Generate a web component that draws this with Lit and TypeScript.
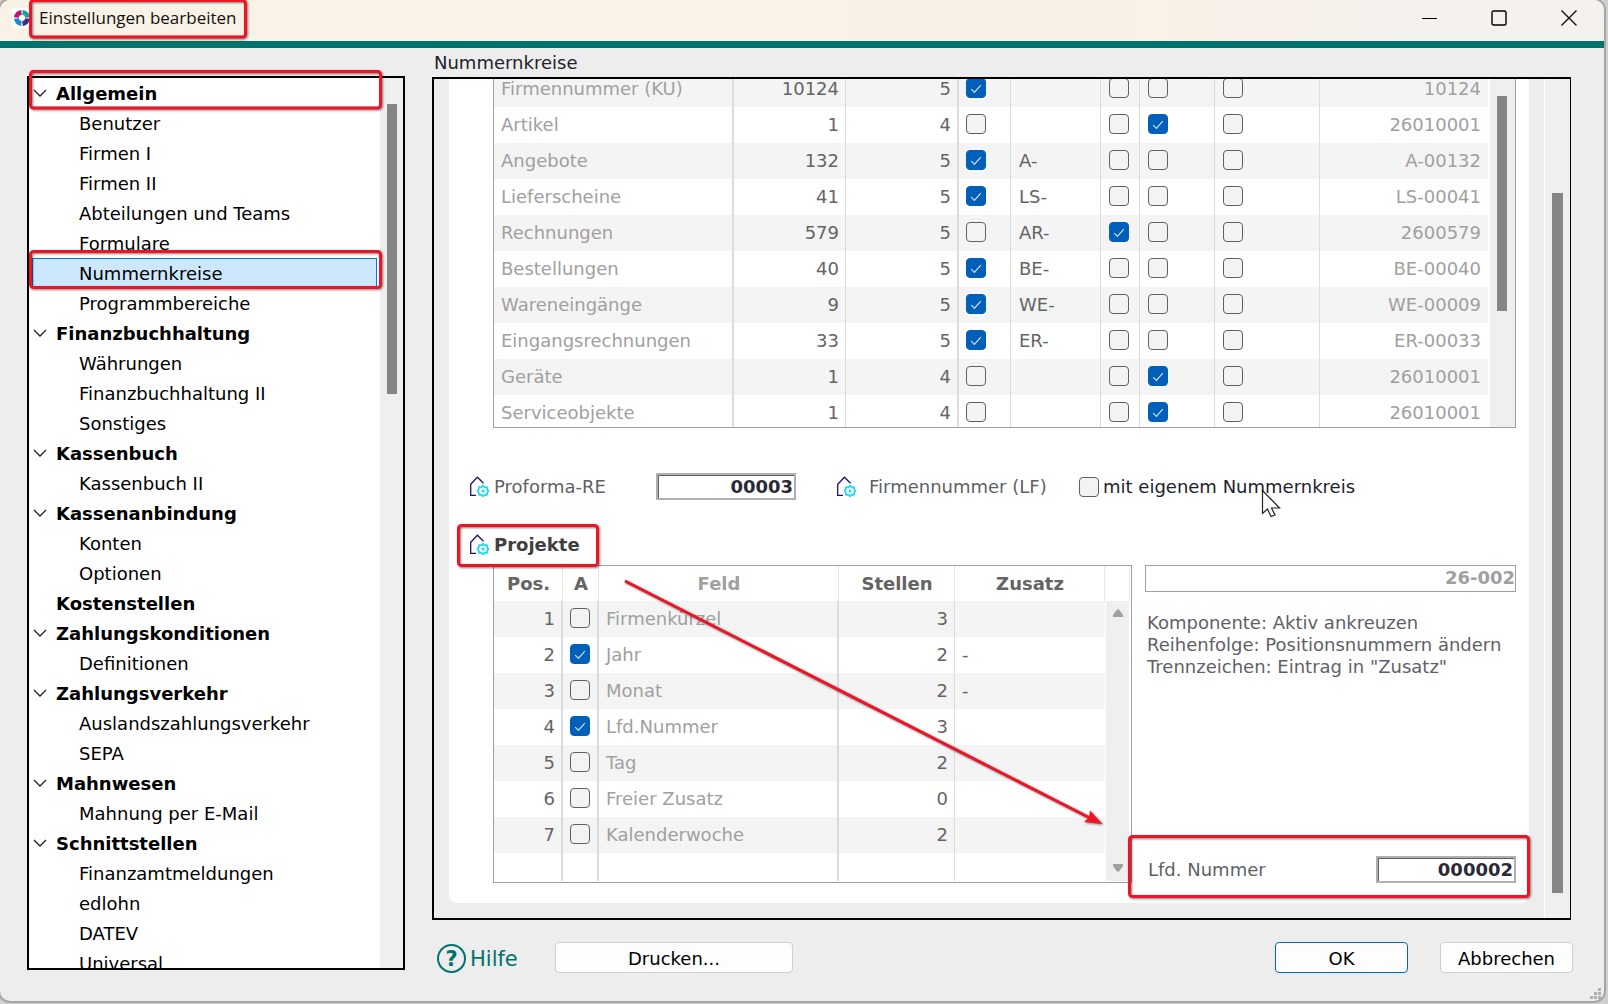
import { LitElement, html, css, svg, nothing } from "lit";
import { customElement, property } from "lit/decorators.js";
import { classMap } from "lit/directives/class-map.js";

interface TreeItem {
  text: string;
  group?: boolean;
  open?: boolean;
  selected?: boolean;
}

const g = (text: string, open = true): TreeItem => ({ text, group: true, open });
const c = (text: string, selected = false): TreeItem => ({ text, selected });

const TREE: TreeItem[] = [
  g("Allgemein"),
  c("Benutzer"),
  c("Firmen I"),
  c("Firmen II"),
  c("Abteilungen und Teams"),
  c("Formulare"),
  c("Nummernkreise", true),
  c("Programmbereiche"),
  g("Finanzbuchhaltung"),
  c("Währungen"),
  c("Finanzbuchhaltung II"),
  c("Sonstiges"),
  g("Kassenbuch"),
  c("Kassenbuch II"),
  g("Kassenanbindung"),
  c("Konten"),
  c("Optionen"),
  g("Kostenstellen", false),
  g("Zahlungskonditionen"),
  c("Definitionen"),
  g("Zahlungsverkehr"),
  c("Auslandszahlungsverkehr"),
  c("SEPA"),
  g("Mahnwesen"),
  c("Mahnung per E-Mail"),
  g("Schnittstellen"),
  c("Finanzamtmeldungen"),
  c("edlohn"),
  c("DATEV"),
  c("Universal"),
];

interface RangeRow {
  name: string;
  next: string;
  digits: string;
  fill: boolean;
  prefix: string;
  year: boolean;
  month: boolean;
  day: boolean;
  sample: string;
}

const r = (
  name: string, next: string, digits: string, fill: boolean, prefix: string,
  year: boolean, month: boolean, sample: string,
): RangeRow => ({ name, next, digits, fill, prefix, year, month, day: false, sample });

const RANGES: RangeRow[] = [
  r("Firmennummer (KU)", "10124", "5", true, "", false, false, "10124"),
  r("Artikel", "1", "4", false, "", false, true, "26010001"),
  r("Angebote", "132", "5", true, "A-", false, false, "A-00132"),
  r("Lieferscheine", "41", "5", true, "LS-", false, false, "LS-00041"),
  r("Rechnungen", "579", "5", false, "AR-", true, false, "2600579"),
  r("Bestellungen", "40", "5", true, "BE-", false, false, "BE-00040"),
  r("Wareneingänge", "9", "5", true, "WE-", false, false, "WE-00009"),
  r("Eingangsrechnungen", "33", "5", true, "ER-", false, false, "ER-00033"),
  r("Geräte", "1", "4", false, "", false, true, "26010001"),
  r("Serviceobjekte", "1", "4", false, "", false, true, "26010001"),
];

const PARTS = [
  { field: "Firmenkürzel", on: false, digits: "3", extra: "" },
  { field: "Jahr", on: true, digits: "2", extra: "-" },
  { field: "Monat", on: false, digits: "2", extra: "-" },
  { field: "Lfd.Nummer", on: true, digits: "3", extra: "" },
  { field: "Tag", on: false, digits: "2", extra: "" },
  { field: "Freier Zusatz", on: false, digits: "0", extra: "" },
  { field: "Kalenderwoche", on: false, digits: "2", extra: "" },
];

const checkboxStyles = css`
  input[type="checkbox"] {
    appearance: none;
    display: block;
    flex: none;
    box-sizing: border-box;
    width: 20px;
    height: 20px;
    margin: 0;
    border: 1px solid #606060;
    border-radius: 4px;
    background: #f3f3f3;
  }
  input[type="checkbox"]:checked {
    border-color: #005fb8;
    background: #005fb8;
  }
  input[type="checkbox"]:checked::after {
    content: "";
    display: block;
    box-sizing: border-box;
    width: 10px;
    height: 5px;
    margin: 6px 4px;
    border: solid #e4eef8;
    border-width: 0 0 1px 1px;
    transform: rotate(-48deg);
  }
`;

@customElement("range-icon")
export class RangeIcon extends LitElement {
  static styles = css`
    :host { display: block; flex: none; width: 20px; height: 21px; }
    svg { display: block; }
  `;
  render() {
    return html`<svg width="20" height="21" viewBox="0 0 20 21" fill="none" aria-hidden="true">
      <path d="M7 19.300H1.700V8.200L8.400 1.200L14.500 7.200" stroke="#1b1464" stroke-width="1.300" />
      <path
        d="M14 9.600l1.600 1.700 2.400-.3.200 2.400 1.300 1.600-1.300 1.600-.2 2.400-2.400-.3L14 20.400l-1.600-1.700-2.400.3-.2-2.400L8.500 15l1.300-1.600.2-2.400 2.400.3z"
        stroke="#14dcf5" stroke-width="1.700" stroke-linejoin="round" />
      <circle cx="14" cy="15" r="1.500" fill="#14dcf5" />
    </svg>`;
  }
}

@customElement("settings-tree")
export class SettingsTree extends LitElement {
  static styles = css`
    :host {
      display: flex;
      box-sizing: border-box;
      min-height: 0;
      overflow: hidden;
      border: 2px solid #000;
      background: #efefef;
    }
    .list {
      flex: 1;
      margin: 0;
      padding: 0 3px 0 3px;
      list-style: none;
      background: #fff;
      overflow: hidden;
    }
    .item {
      display: flex;
      align-items: center;
      box-sizing: border-box;
      height: 30px;
      padding-left: 46px;
      border: 1px solid transparent;
      color: #000;
      text-decoration: none;
      white-space: nowrap;
    }
    .group { padding-left: 0; font-weight: bold; }
    .selected { border-color: #0078d7; background: #cce8ff; }
    .chevron { flex: none; width: 14px; height: 14px; margin-right: 9px; }
    .track { flex: none; width: 23px; padding-top: 26px; box-sizing: border-box; }
    .thumb { width: 10px; height: 290px; margin-left: 7px; background: #858585; }
  `;
  render() {
    return html`
      <ul class="list">
        ${TREE.map(
          (item) => html`<li>
            <a href="#" class=${classMap({ item: true, group: !!item.group, selected: !!item.selected })}>
              ${item.group
                ? html`<svg class="chevron" viewBox="0 0 14 14" aria-hidden="true">
                    ${item.open
                      ? svg`<path d="M1 4L7 10L13 4" fill="none" stroke="#222" stroke-width="1.300" />`
                      : nothing}
                  </svg>`
                : nothing}
              <span>${item.text}</span>
            </a>
          </li>`,
        )}
      </ul>
      <div class="track"><div class="thumb"></div></div>
    `;
  }
}

@customElement("range-table")
export class RangeTable extends LitElement {
  static styles = [
    checkboxStyles,
    css`
      :host {
        display: flex;
        box-sizing: border-box;
        height: 357px;
        overflow: hidden;
        border: 1px solid #a0a0a0;
        border-top: 0;
        background: #fff;
      }
      .view { flex: 1; overflow: hidden; }
      table { width: 100%; table-layout: fixed; border-collapse: separate; border-spacing: 0; }
      tr:nth-child(odd) { background: #f4f4f4; }
      td {
        box-sizing: border-box;
        height: 36px;
        padding: 0 6px 0 7px;
        border-right: 1px solid #dcdcdc;
        color: #646464;
        line-height: 20px;
        white-space: nowrap;
      }
      td.wide { border-right-width: 2px; }
      td:last-child { border-right: 0; padding-right: 7px; }
      td.prefixed { padding-left: 8px; }
      td.box { padding: 0 0 2px 8px; }
      td.first { padding-left: 7px; }
      .num { text-align: right; }
      td.dim { color: #a0a0a0; }
      .name { width: 240px; }
      .next { width: 112px; }
      .digits { width: 113px; }
      .fill { width: 52px; }
      .prefix { width: 90px; }
      .year { width: 39px; }
      .month { width: 75px; }
      .day { width: 105px; }
      .track { flex: none; width: 25px; margin-left: 2px; padding-top: 25px; box-sizing: border-box; background: #efefef; }
      .thumb { width: 10px; height: 215px; margin-left: 7px; background: #858585; }
    `,
  ];
  private box(row: RangeRow, label: string, on: boolean, first = false) {
    return html`<td class=${classMap({ box: true, first })}>
      <input type="checkbox" .checked=${on} aria-label="${row.name}: ${label}" />
    </td>`;
  }
  render() {
    return html`
      <div class="view">
        <table>
          <colgroup>
            <col class="name" /><col class="next" /><col class="digits" /><col class="fill" />
            <col class="prefix" /><col class="year" /><col class="month" /><col class="day" /><col />
          </colgroup>
          <tbody>
            ${RANGES.map(
              (row) => html`<tr>
                <td class="wide dim">${row.name}</td>
                <td class="num">${row.next}</td>
                <td class="num wide">${row.digits}</td>
                ${this.box(row, "Auffüllen", row.fill, true)}
                <td class="prefixed">${row.prefix}</td>
                ${this.box(row, "Jahr", row.year)} ${this.box(row, "Monat", row.month)}
                ${this.box(row, "Tag", row.day)}
                <td class="num dim">${row.sample}</td>
              </tr>`,
            )}
          </tbody>
        </table>
      </div>
      <div class="track"><div class="thumb"></div></div>
    `;
  }
}

@customElement("part-table")
export class PartTable extends LitElement {
  static styles = [
    checkboxStyles,
    css`
      :host {
        display: flex;
        box-sizing: border-box;
        height: 318px;
        overflow: hidden;
        border: 1px solid #a0a0a0;
        background: #fff;
      }
      .view { flex: 1; overflow: hidden; }
      table { width: 100%; table-layout: fixed; border-collapse: separate; border-spacing: 0; }
      tbody tr:nth-child(odd) { background: #f4f4f4; }
      tbody tr.blank { background: #fff; }
      th, td {
        box-sizing: border-box;
        height: 36px;
        padding: 0 7px;
        border-right: 1px solid #dcdcdc;
        color: #646464;
        line-height: 20px;
        white-space: nowrap;
      }
      th { height: 35px; padding: 1px 0 0 1px; border-right-color: #e6e6e6; text-align: center; }
      td:last-child { border-right-color: transparent; }
      td.wide { border-right-width: 2px; }
      td.box { padding: 0 0 2px 7px; }
      td.num { padding-right: 6px; text-align: right; }
      .blank td { height: 28px; }
      th.dim, td.dim { color: #a0a0a0; }
      .pos { width: 69px; }
      .active { width: 36px; }
      .field { width: 240px; }
      .digits { width: 116px; }
      .side { display: flex; flex-direction: column; flex: none; width: 26px; }
      .head { height: 35px; margin-right: 1px; border-right: 1px solid #e6e6e6; }
      .track {
        display: flex;
        flex: 1;
        flex-direction: column;
        align-items: center;
        justify-content: space-between;
        margin: 0 2px 1px 1px;
        padding: 8px 0 9px;
        background: #efefef;
      }
    `,
  ];
  render() {
    return html`
      <div class="view">
        <table>
          <colgroup>
            <col class="pos" /><col class="active" /><col class="field" /><col class="digits" /><col />
          </colgroup>
          <thead>
            <tr>
              <th>Pos.</th>
              <th>A</th>
              <th class="dim">Feld</th>
              <th>Stellen</th>
              <th>Zusatz</th>
            </tr>
          </thead>
          <tbody>
            ${PARTS.map(
              (part, i) => html`<tr>
                <td class="num wide">${i + 1}</td>
                <td class="box wide"><input type="checkbox" .checked=${part.on} aria-label="${part.field} aktiv" /></td>
                <td class="dim wide">${part.field}</td>
                <td class="num">${part.digits}</td>
                <td>${part.extra}</td>
              </tr>`,
            )}
            <tr class="blank"><td class="wide"></td><td class="wide"></td><td class="wide"></td><td></td><td></td></tr>
          </tbody>
        </table>
      </div>
      <div class="side">
        <div class="head"></div>
        <div class="track">
          <svg width="10" height="8" viewBox="0 0 10 8" aria-hidden="true">
            <path d="M4 .500h2L10 6v2H0V6z" fill="#a0a0a0" />
          </svg>
          <svg width="10" height="8" viewBox="0 0 10 8" aria-hidden="true">
            <path d="M0 0h10v2L6 7.500H4L0 2z" fill="#a0a0a0" />
          </svg>
        </div>
      </div>
    `;
  }
}

@customElement("number-ranges")
export class NumberRanges extends LitElement {
  static styles = [
    checkboxStyles,
    css`
      :host {
        display: flex;
        box-sizing: border-box;
        min-height: 0;
        overflow: hidden;
        border: 2px solid #000;
        border-right-width: 1px;
        background: #ededed;
      }
      .view { flex: 1; min-width: 0; padding: 0 15px; overflow: hidden; }
      /* The page is scrolled: its first table starts above the visible area. */
      .card {
        box-sizing: border-box;
        margin-top: -8px;
        padding: 0 13px 20px 20px;
        border-radius: 0 0 8px 8px;
        background: #fff;
      }
      range-table, .project { margin-left: 24px; }
      .line { display: flex; align-items: center; height: 27px; color: #5f5f68; }
      .single { margin-top: 45px; }
      .heading { margin: 31px 0 7px; }
      h2 { margin: 0 0 0 5px; font-size: 18px; line-height: 21px; color: #3f3f3f; }
      .caption { margin-left: 5px; width: 162px; }
      .supplier { margin-left: 13px; width: 210px; }
      .number {
        box-sizing: border-box;
        width: 140px;
        height: 27px;
        padding: 0 1px;
        border: 2px solid #b0b0b0;
        border-radius: 0;
        background: #fff;
        box-shadow: inset 1px 1px 0 #606060;
        color: #2a2a34;
        font: bold 18px "DejaVu Sans", Verdana, sans-serif;
        text-align: right;
      }
      .single .number { margin-right: 40px; }
      .own { background: #e8e8e8; }
      .own-label { margin-left: 4px; color: #22222c; }
      .project { display: grid; grid-template-columns: 639px 1fr; gap: 13px; }
      .details { display: flex; flex-direction: column; min-width: 0; }
      .sample {
        box-sizing: border-box;
        width: 100%;
        height: 27px;
        padding: 0 0 2px;
        border: 1px solid #a0a0a0;
        border-radius: 0;
        background: #fff;
        color: #a0a0a0;
        font: bold 18px "DejaVu Sans", Verdana, sans-serif;
        text-align: right;
      }
      .hint { margin: 20px 0 0 2px; color: #5f5f68; line-height: 22px; white-space: nowrap; }
      .last { justify-content: space-between; margin-top: auto; padding-left: 3px; }
      .track { flex: none; width: 26px; padding-top: 114px; box-sizing: border-box; border-left: 1px solid #fff; background: #efefef; }
      .thumb { width: 11px; height: 700px; margin-left: 7px; background: #858585; }
    `,
  ];
  render() {
    return html`
      <div class="view">
        <div class="card">
          <range-table></range-table>
          <div class="line single">
            <range-icon></range-icon>
            <label class="caption" for="proforma">Proforma-RE</label>
            <input class="number" id="proforma" type="text" .value=${"00003"} />
            <range-icon></range-icon>
            <span class="supplier">Firmennummer (LF)</span>
            <input class="own" id="own" type="checkbox" />
            <label class="own-label" for="own">mit eigenem Nummernkreis</label>
          </div>
          <div class="line heading">
            <range-icon></range-icon>
            <h2>Projekte</h2>
          </div>
          <div class="project">
            <part-table></part-table>
            <div class="details">
              <input class="sample" type="text" readonly aria-label="Beispiel" .value=${"26-002"} />
              <p class="hint">
                Komponente: Aktiv ankreuzen<br />Reihenfolge: Positionsnummern ändern<br />Trennzeichen: Eintrag in
                "Zusatz"
              </p>
              <div class="line last">
                <label for="serial">Lfd. Nummer</label>
                <input class="number" id="serial" type="text" .value=${"000002"} />
              </div>
            </div>
          </div>
        </div>
      </div>
      <div class="track"><div class="thumb"></div></div>
    `;
  }
}

@customElement("title-bar")
export class TitleBar extends LitElement {
  @property() heading = "";
  static styles = css`
    :host {
      display: flex;
      align-items: center;
      box-sizing: border-box;
      height: 48px;
      padding: 0 15px 5px 12px;
      border-bottom: 7px solid #00736c;
      background: linear-gradient(90deg, #f9f2e6 0%, #faf1e6 70%, #f5f1ed 88%);
    }
    .logo { flex: none; width: 20px; height: 20px; border-radius: 4px; background: #fff; }
    h1 {
      flex: 1;
      margin: 0 0 0 7px;
      color: #111;
      font: 17px/24px "Open Sans", "Segoe UI", sans-serif;
      white-space: nowrap;
    }
    button {
      display: grid;
      place-items: center;
      width: 40px;
      height: 30px;
      margin-left: 30px;
      padding: 0;
      border: 0;
      background: none;
    }
  `;
  render() {
    return html`
      <svg class="logo" viewBox="0 0 20 20" aria-hidden="true">
        <g fill="none" stroke-width="4.800">
          <path d="M9.500 4.400A5.600 5.600 0 0 0 4.400 9.500" stroke="#c0146e" />
          <path d="M10.500 4.400A5.600 5.600 0 0 1 15.600 9.500" stroke="#0aa79d" />
          <path d="M15.600 10.500A5.600 5.600 0 0 1 10.500 15.600" stroke="#3a2f86" />
          <path d="M9.500 15.600A5.600 5.600 0 0 1 4.400 10.500" stroke="#1a86cf" />
        </g>
      </svg>
      <h1>${this.heading}</h1>
      <button type="button" aria-label="Minimieren">
        <svg width="16" height="16" viewBox="0 0 16 16"><path d="M1 8.500H16" stroke="#000" /></svg>
      </button>
      <button type="button" aria-label="Maximieren">
        <svg width="16" height="16" viewBox="0 0 16 16">
          <rect x="1" y="1" width="14" height="14" rx="1.500" fill="none" stroke="#000" stroke-width="1.400" />
        </svg>
      </button>
      <button type="button" aria-label="Schließen">
        <svg width="16" height="16" viewBox="0 0 16 16">
          <path d="M.500 .500L15.500 15.500M15.500 .500L.500 15.500" stroke="#111" stroke-width="1.400" />
        </svg>
      </button>
    `;
  }
}

@customElement("app-root")
export class AppRoot extends LitElement {
  static styles = css`
    :host {
      display: block;
      position: relative;
      box-sizing: border-box;
      height: 100vh;
      padding: 0 4px 3px 0;
      overflow: hidden;
      background: #cfcfcf;
      font: 18px "DejaVu Sans", Verdana, sans-serif;
    }
    .window {
      display: flex;
      flex-direction: column;
      box-sizing: border-box;
      height: 100%;
      overflow: hidden;
      border-radius: 10px;
      background: #ededed;
      box-shadow: 0 0 0 2px #a6a6a6;
    }
    .body {
      display: grid;
      flex: 1;
      grid-template-columns: 378px 1fr;
      gap: 27px;
      min-height: 0;
      padding: 0 33px 0 27px;
    }
    settings-tree { margin: 28px 0 31px; }
    .main { display: flex; flex-direction: column; min-width: 0; min-height: 0; }
    .section {
      margin: 0 0 0 2px;
      padding-top: 1px;
      color: #22222c;
      font-size: 18px;
      font-weight: normal;
      line-height: 28px;
    }
    number-ranges { flex: 1; }
    .footer {
      display: flex;
      align-items: center;
      flex: none;
      height: 31px;
      padding: 22px 0 28px 5px;
      margin-right: -2px;
    }
    .help {
      display: flex;
      align-items: center;
      gap: 4px;
      width: 118px;
      padding-top: 2px;
      color: #00736c;
      font-size: 21px;
      text-decoration: none;
    }
    .help-mark {
      display: grid;
      place-items: center;
      box-sizing: border-box;
      width: 29px;
      height: 29px;
      border: 2px solid #00736c;
      border-radius: 50%;
      font-weight: bold;
      line-height: 24px;
    }
    .button {
      box-sizing: border-box;
      width: 133px;
      height: 31px;
      padding: 1px 0 0;
      border: 1px solid #cfcfcf;
      border-radius: 4px;
      background: #fdfdfd;
      color: #000;
      font: inherit;
    }
    .print { width: 238px; margin-right: auto; }
    .ok { margin-right: 32px; border-color: #0067c0; }
    .marks { position: absolute; inset: 0; width: 100%; height: 100%; pointer-events: none; }
    .frames { filter: drop-shadow(1px 1px 1px rgba(0, 0, 0, 0.5)); }
  `;
  render() {
    return html`
      <div class="window">
        <title-bar heading="Einstellungen bearbeiten"></title-bar>
        <div class="body">
          <settings-tree></settings-tree>
          <div class="main">
            <h2 class="section">Nummernkreise</h2>
            <number-ranges></number-ranges>
            <div class="footer">
              <a class="help" href="#"><span class="help-mark">?</span>Hilfe</a>
              <button class="button print" type="button">Drucken...</button>
              <button class="button ok" type="button">OK</button>
              <button class="button" type="button">Abbrechen</button>
            </div>
          </div>
        </div>
      </div>
      <svg class="marks" aria-hidden="true">
        <g fill="#b0b0b0">
          <path d="M1598 988h3v3h-3zM1594 992h3v3h-3zM1598 992h3v3h-3zM1590 996h3v3h-3zM1594 996h3v3h-3zM1598 996h3v3h-3z" />
        </g>
        <path
          d="M1262.500 490.500V513.500L1267.500 509L1271 516.500L1275 515L1271.500 508H1279.500Z"
          fill="#fff" stroke="#22222c" stroke-width="1.200" />
        <g class="frames" fill="none" stroke="#ee1425" stroke-width="3">
          <rect x="30.500" y=".500" width="215" height="36.500" rx="3" />
          <rect x="30.500" y="71.500" width="350" height="36.500" rx="3" />
          <rect x="30.500" y="251.500" width="350" height="36" rx="3" />
          <rect x="458.500" y="525.500" width="139" height="40" rx="3" />
          <rect x="1129.500" y="836.500" width="399" height="60" rx="3" />
          <path d="M625 581L1090 818" />
          <path d="M1102.500 824L1084 822L1089 817.500L1090 810.500Z" fill="#ee1425" stroke="none" />
        </g>
      </svg>
    `;
  }
}
